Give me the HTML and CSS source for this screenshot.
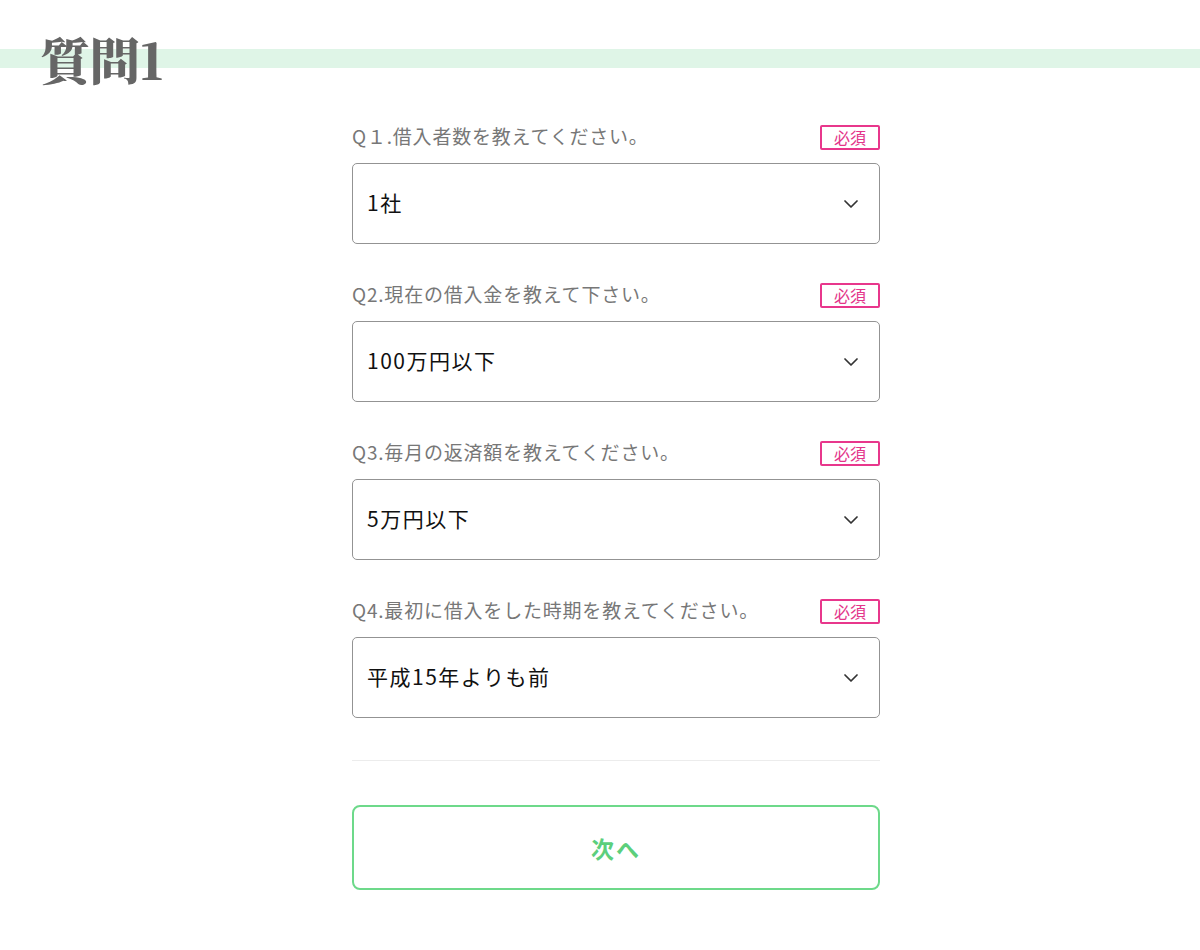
FILE: index.html
```html
<!DOCTYPE html>
<html lang="ja">
<head>
<meta charset="utf-8">
<title>質問1</title>
<link rel="stylesheet" href="styles.css">
</head>
<body>
<header class="page-head">
  <h1 class="page-title">質問1</h1>
</header>
<main class="form">
  <div class="field">
    <div class="field-head">
      <span class="field-label">Q１.借入者数を教えてください。</span>
      <span class="badge">必須</span>
    </div>
    <div class="select">
      <span class="select-value">1社</span>
      <svg class="chev" width="14" height="8" viewBox="0 0 14 8"><path d="M1 1l6 6 6-6" fill="none" stroke="#333" stroke-width="1.7" stroke-linecap="round" stroke-linejoin="round"/></svg>
    </div>
  </div>
  <div class="field">
    <div class="field-head">
      <span class="field-label">Q2.現在の借入金を教えて下さい。</span>
      <span class="badge">必須</span>
    </div>
    <div class="select">
      <span class="select-value">100万円以下</span>
      <svg class="chev" width="14" height="8" viewBox="0 0 14 8"><path d="M1 1l6 6 6-6" fill="none" stroke="#333" stroke-width="1.7" stroke-linecap="round" stroke-linejoin="round"/></svg>
    </div>
  </div>
  <div class="field">
    <div class="field-head">
      <span class="field-label">Q3.毎月の返済額を教えてください。</span>
      <span class="badge">必須</span>
    </div>
    <div class="select">
      <span class="select-value">5万円以下</span>
      <svg class="chev" width="14" height="8" viewBox="0 0 14 8"><path d="M1 1l6 6 6-6" fill="none" stroke="#333" stroke-width="1.7" stroke-linecap="round" stroke-linejoin="round"/></svg>
    </div>
  </div>
  <div class="field">
    <div class="field-head">
      <span class="field-label">Q4.最初に借入をした時期を教えてください。</span>
      <span class="badge">必須</span>
    </div>
    <div class="select">
      <span class="select-value">平成15年よりも前</span>
      <svg class="chev" width="14" height="8" viewBox="0 0 14 8"><path d="M1 1l6 6 6-6" fill="none" stroke="#333" stroke-width="1.7" stroke-linecap="round" stroke-linejoin="round"/></svg>
    </div>
  </div>
  <hr class="divider">
  <button class="next-btn" type="button">次へ</button>
</main>
</body>
</html>
```

FILE: styles.css
```css
* { box-sizing: border-box; }
html, body { margin: 0; padding: 0; background: #fff; }
body {
  font-family: "Noto Sans CJK JP", "Noto Sans", sans-serif;
  color: #222;
}
.page-head {
  height: 84px;
  padding-left: 40px;
  background: linear-gradient(to bottom, transparent 49px, #dff5e7 49px, #dff5e7 68px, transparent 68px);
}
.page-title {
  margin: 0;
  padding-top: 32px;
  font-family: "Noto Serif CJK JP", "Liberation Serif", "Noto Sans CJK JP", serif;
  font-size: 50px;
  line-height: 52px;
  font-weight: 900;
  color: #666;
}
.form {
  width: 528px;
  margin-left: calc(50% - 248px);
  padding-top: 41px;
  display: flex;
  flex-direction: column;
}
.field { margin-bottom: 39px; }
.field:last-of-type { margin-bottom: 0; }
.field-head {
  display: flex;
  align-items: center;
  justify-content: space-between;
  height: 25px;
  margin-bottom: 13px;
}
.field-label {
  font-size: 19px;
  letter-spacing: 0.8px;
  color: #777;
  line-height: 1;
  position: relative;
  top: -2px;
}
.badge {
  width: 60px;
  height: 25px;
  border: 2px solid #e8378c;
  border-radius: 2px;
  color: #e3358a;
  font-size: 16px;
  line-height: 21px;
  text-align: center;
}
.select {
  height: 81px;
  border: 1.5px solid #939393;
  border-radius: 5px;
  display: flex;
  align-items: center;
  justify-content: space-between;
  padding: 0 21px 0 14px;
}
.select-value {
  font-size: 21px;
  font-weight: 400;
  letter-spacing: 1.5px;
  color: #111;
  position: relative;
  top: -2px;
}
.chev { display: block; }
.divider {
  margin: 42px 0 0;
  border: 0;
  border-top: 1.5px solid #ececec;
  height: 0;
}
.next-btn {
  margin-top: 44px;
  height: 85px;
  width: 100%;
  background: #fff;
  border: 2px solid #6dd98a;
  border-radius: 8px;
  font-family: "Noto Sans CJK JP", sans-serif;
  font-size: 23px;
  font-weight: 700;
  letter-spacing: 2px;
  color: #5ccf7c;
}
```
